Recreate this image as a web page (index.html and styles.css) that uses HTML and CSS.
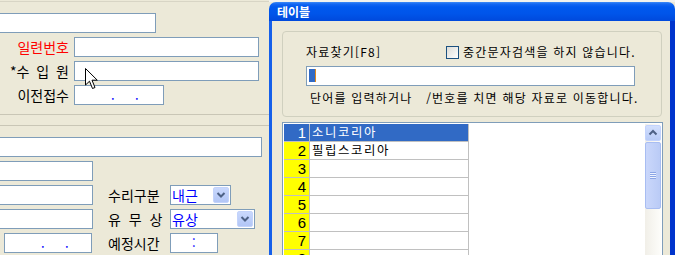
FILE: index.html
```html
<!DOCTYPE html>
<html lang="ko">
<head>
<meta charset="utf-8">
<link rel="stylesheet" href="styles.css">
</head>
<body>
<div class="screen">
  <div class="left">
    <div class="topline"></div>
    <div class="row r-a"><div class="box w-a"></div></div>
    <div class="row"><span class="lbl red">일련번호</span><div class="box w-b"></div></div>
    <div class="row"><span class="lbl sp">*수 입 원</span><div class="box w-b"></div></div>
    <div class="row"><span class="lbl">이전접수</span><div class="box w-d date"><span>.</span><span>.</span></div></div>
    <div class="sep s1"></div>
    <div class="sep s2"></div>
    <div class="row r-e"><div class="box w-e"></div></div>
    <div class="row"><div class="box w-f"></div></div>
    <div class="row"><div class="box w-f"></div><span class="rlbl">수리구분</span>
      <div class="combo c1"><span>내근</span><i class="drop"><svg width="14" height="14" viewBox="0 0 14 14"><polyline points="3.5,5 7,8.5 10.5,5" fill="none" stroke="#4D6185" stroke-width="2"/></svg></i></div></div>
    <div class="row"><div class="box w-f"></div><span class="rlbl sp2">유 무 상</span>
      <div class="combo c2"><span>유상</span><i class="drop"><svg width="14" height="14" viewBox="0 0 14 14"><polyline points="3.5,5 7,8.5 10.5,5" fill="none" stroke="#4D6185" stroke-width="2"/></svg></i></div></div>
    <div class="row"><div class="box w-i date"><span>.</span><span>.</span></div><span class="rlbl">예정시간</span>
      <div class="box w-t time"><span>:</span></div></div>
  </div>
  <div class="win">
    <div class="behind"></div>
    <div class="title">테이블</div>
    <div class="wbody">
      <div class="group">
        <div class="g-row"><span class="g-lbl">자료찾기[F8]</span><span class="chk"></span><span>중간문자검색을 하지 않습니다.</span></div>
        <div class="find"><span class="caret"></span></div>
        <div class="hint">단어를 입력하거나   /번호를 치면 해당 자료로 이동합니다.</div>
      </div>
      <div class="grid">
        <div class="cells">
          <div class="gr sel"><span class="num">1</span><span class="dat">소니코리아</span></div>
          <div class="gr"><span class="num">2</span><span class="dat">필립스코리아</span></div>
          <div class="gr"><span class="num">3</span><span class="dat"></span></div>
          <div class="gr"><span class="num">4</span><span class="dat"></span></div>
          <div class="gr"><span class="num">5</span><span class="dat"></span></div>
          <div class="gr"><span class="num">6</span><span class="dat"></span></div>
          <div class="gr"><span class="num">7</span><span class="dat"></span></div>
          <div class="gr"><span class="num">8</span><span class="dat"></span></div>
        </div>
        <div class="vs">
          <div class="up"><svg width="14" height="14" viewBox="0 0 14 14"><polyline points="3.5,8.5 7,5 10.5,8.5" fill="none" stroke="#4D6185" stroke-width="2"/></svg></div>
          <div class="thumb"><span class="grip"></span></div>
        </div>
      </div>
    </div>
  </div>
  <svg class="cursor" width="14" height="22" viewBox="0 0 14 22"><polygon points="0.5,0.5 0.5,17 4.5,13.2 7.5,20.5 10,19.5 7,12.2 12.3,12.2" fill="#fff" stroke="#000" stroke-width="1" stroke-linejoin="miter"/></svg>
</div>
</body>
</html>
```
FILE: styles.css
```css
body {
  margin: 0;
  background: #ECE9D8;
  font-family: "Noto Sans CJK KR", sans-serif;
  color: #000;
}
.screen {
  position: relative;
  width: 675px;
  height: 255px;
  overflow: hidden;
  display: flex;
}
.left {
  width: 269px;
  flex: none;
}
.topline {
  height: 1px;
  margin-top: 1px;
  background: #D8D5C5;
}
.row {
  display: flex;
  align-items: center;
  height: 20px;
  margin-top: 4px;
}
.r-a, .r-e { margin-top: 11px; }
.sep {
  height: 1px;
  background: #C9C6B6;
}
.s1 { margin-top: 9px; }
.s2 { margin-top: 10px; }
.box {
  box-sizing: border-box;
  height: 20px;
  border: 1px solid #7F9DB9;
  background: #fff;
  flex: none;
}
.w-a { width: 161px; margin-left: -5px; }
.w-b { width: 185px; }
.w-d { width: 90px; }
.w-e { width: 267px; margin-left: -5px; }
.w-f { width: 98px; margin-left: -5px; }
.w-i { width: 88px; margin-left: 4px; }
.w-t { width: 48px; }
.lbl {
  width: 69px;
  margin-right: 5px;
  text-align: right;
  font-size: 14px;
  line-height: 20px;
  white-space: nowrap;
}
.red { color: #f00; }
.sp { word-spacing: 3px; }
.rlbl {
  width: 56px;
  margin: 0 6px 0 15px;
  font-size: 14px;
  line-height: 20px;
  white-space: nowrap;
}
.w-i + .rlbl { margin-left: 16px; }
.sp2 { word-spacing: 4px; }
.date, .time {
  display: flex;
  color: #00f;
  font-size: 13px;
  line-height: 18px;
  padding-left: 36px;
}
.date span { width: 24px; }
.time { padding-left: 21px; }
.combo {
  box-sizing: border-box;
  height: 20px;
  border: 1px solid #7F9DB9;
  background: #fff;
  display: flex;
  align-items: center;
  justify-content: space-between;
  padding: 1px;
  color: #00f;
  font-size: 14px;
  line-height: 16px;
  flex: none;
}
.c1 { width: 61px; }
.c2 { width: 85px; }
.drop {
  display: block;
  box-sizing: border-box;
  width: 16px;
  height: 16px;
  border: 1px solid #C3D3FB;
  border-radius: 2px;
  background: linear-gradient(#C9D8FD, #B2C6F6);
}
.drop svg { display: block; }

.win {
  width: 406px;
  flex: none;
  display: flex;
  flex-direction: column;
}
.behind {
  height: 2px;
  background: #F2F2EE;
}
.title {
  height: 19px;
  border-radius: 7px 7px 0 0;
  background: linear-gradient(180deg, #3D8AF7 0, #1467F2 2px, #0058EE 5px, #0055EA 60%, #0049DC 100%);
  color: #fff;
  font-weight: bold;
  font-size: 12px;
  line-height: 19px;
  padding-left: 8px;
}
.wbody {
  flex: 1;
  background: #ECE9D8;
  border-left: 3px solid #1660EA;
  border-right: 5px solid #0034CC;
  padding: 10px 0 0 10px;
  display: flex;
  flex-direction: column;
  min-height: 0;
}
.group {
  flex: none;
  box-sizing: border-box;
  width: 380px;
  height: 86px;
  border: 1px solid #D0D0BF;
  border-radius: 4px;
  padding: 12px 0 0 23px;
  font-size: 12px;
  letter-spacing: 1.2px;
}
.g-row {
  display: flex;
  align-items: center;
  height: 16px;
  line-height: 16px;
  white-space: nowrap;
}
.g-lbl { width: 140px; }
.chk {
  box-sizing: border-box;
  width: 13px;
  height: 13px;
  border: 1px solid #1C5180;
  background: linear-gradient(135deg, #DCDCD7, #fff);
  margin-right: 4px;
}
.find {
  margin-top: 6px;
  box-sizing: border-box;
  width: 329px;
  height: 20px;
  border: 1px solid #7F9DB9;
  background: #fff;
  padding: 2px 0 0 2px;
  display: flex;
  align-items: flex-start;
}
.caret {
  width: 6px;
  height: 13px;
  background: #316AC5;
  border-right: 1px solid #E08A1E;
}
.hint {
  margin-top: 5px;
  padding-left: 4px;
  line-height: 14px;
  white-space: pre;
}
.grid {
  margin-top: 5px;
  box-sizing: border-box;
  width: 381px;
  flex: 1;
  border: 1px solid #7F9DB9;
  border-bottom: none;
  background: #fff;
  padding: 1px 1px 0 1px;
  display: flex;
  overflow: hidden;
}
.cells { flex: 1; }
.gr {
  display: flex;
  height: 18px;
  font-size: 12.4px;
  letter-spacing: 1.6px;
  line-height: 17px;
}
.num, .dat {
  box-sizing: border-box;
  height: 18px;
  border-right: 1px solid #C0C0C0;
  border-bottom: 1px solid #C0C0C0;
}
.num {
  width: 26px;
  background: #FFFF00;
  text-align: right;
  padding-right: 3px;
  font-family: "Liberation Sans", sans-serif;
  font-size: 15px;
  letter-spacing: 0;
}
.dat {
  width: 159px;
  padding-left: 2px;
  white-space: nowrap;
}
.sel .num, .sel .dat {
  background: #316AC5;
  color: #fff;
}
.vs {
  width: 16px;
  flex: none;
  background: linear-gradient(90deg, #F1EFE8, #FDFDFA);
  display: flex;
  flex-direction: column;
  padding-top: 1px;
}
.up {
  box-sizing: border-box;
  height: 16px;
  border: 1px solid #C3D3FD;
  border-radius: 2px;
  background: linear-gradient(#D2DFFD, #B8CBF7);
  display: flex;
  align-items: center;
  justify-content: center;
  margin-bottom: 1px;
}
.up svg { display: block; }
.thumb {
  box-sizing: border-box;
  height: 67px;
  border: 1px solid #A8BDF2;
  border-radius: 2px;
  background: linear-gradient(90deg, #CAD7FB, #BACBF6);
  display: flex;
  align-items: center;
  justify-content: center;
}
.grip {
  width: 6px;
  height: 7px;
  background: repeating-linear-gradient(180deg, #8CA5E6 0 1px, #EEF3FF 1px 2px);
}
.cursor {
  position: absolute;
  left: 85px;
  top: 68px;
}
```
